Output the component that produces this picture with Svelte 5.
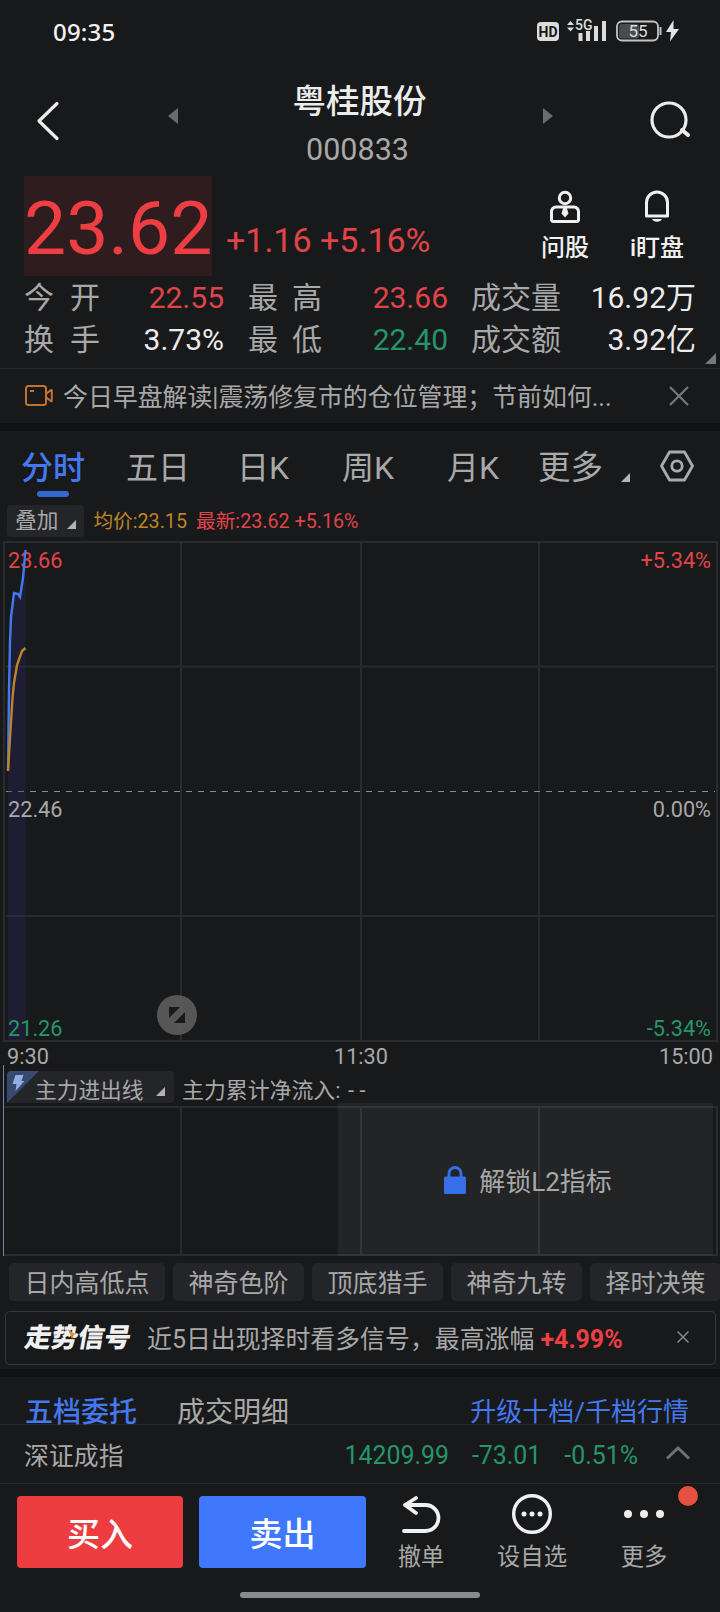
<script>
	const stats = [
		{ label: "今 开", value: "22.55", tone: "up" },
		{ label: "最 高", value: "23.66", tone: "up" },
		{ label: "成交量", value: "16.92万", tone: "plain" },
		{ label: "换 手", value: "3.73%", tone: "plain" },
		{ label: "最 低", value: "22.40", tone: "down" },
		{ label: "成交额", value: "3.92亿", tone: "plain" },
	];
	const periods = ["分时", "五日", "日K", "周K", "月K"];
	const signals = ["日内高低点", "神奇色阶", "顶底猎手", "神奇九转", "择时决策"];

	let period = "分时";

	// minute points, in chart pixels
	const price = [[8, 231], [9, 150], [10, 102], [11, 77], [14, 53], [18, 54], [20, 57], [23, 38], [25.5, 10]];
	const average = [[8, 231], [10, 198], [12.5, 158], [14, 143], [17, 125], [22, 111], [25.5, 108]];
	const toPoints = (list) => list.map((p) => p.join(",")).join(" ");
</script>

<div class="app">
	<div class="status">
		<span class="clock">09:35</span>
		<svg width="146" height="30" viewBox="0 0 146 30">
			<rect x="1" y="6" width="22" height="19" rx="4" fill="#dcdcdc" />
			<text x="12" y="21" class="hd" text-anchor="middle">HD</text>
			<path d="M31 9l3.5-4 3.5 4zM31 11.500h7l-3.500 4z" fill="#dcdcdc" />
			<text x="39" y="14" class="net">5G</text>
			<path d="M44.500 25v-8M52 25v-10M60 25V10M68 25V5" stroke="#dcdcdc" stroke-width="4" />
			<rect x="81" y="5.500" width="41" height="19" rx="5" fill="none" stroke="#c4c4c4" stroke-width="1.800" />
			<rect x="83" y="8" width="20" height="14.500" rx="3" fill="#4a4b4c" />
			<path d="M124.500 11v8" stroke="#c4c4c4" stroke-width="2" />
			<text x="102" y="21" class="power" text-anchor="middle">55</text>
			<path d="M137.500 4l-7.500 12h5l-1 9.500 9-12.500h-5.500z" fill="#e4e4e4" />
		</svg>
	</div>

	<header>
		<svg class="back" width="24" height="42" viewBox="0 0 24 42">
			<path d="M21 3.500L3 21l18 17.500" fill="none" stroke="#ececec" stroke-width="3.200" stroke-linecap="round" stroke-linejoin="round" />
		</svg>
		<svg class="prev" width="10" height="16"><path d="M10 0v16L0 8z" fill="#6b6c6d" /></svg>
		<div class="name">
			<h1>粤桂股份</h1>
			<span>000833</span>
		</div>
		<svg class="next" width="10" height="16"><path d="M0 0v16l10-8z" fill="#6b6c6d" /></svg>
		<svg class="search" width="42" height="40" viewBox="0 0 42 40">
			<circle cx="19" cy="20" r="17" fill="none" stroke="#ececec" stroke-width="3.200" />
			<path d="M32 30l6 5" stroke="#ececec" stroke-width="4" stroke-linecap="round" />
		</svg>
	</header>

	<section class="quote">
		<div class="last">23.62</div>
		<div class="change">+1.16 +5.16%</div>
		<div class="tool ask">
			<svg width="32" height="34" viewBox="0 0 32 34" fill="none" stroke="#f0f0f0" stroke-width="3">
				<circle cx="16" cy="8" r="5.700" />
				<path d="M7 17h18a4.500 4.500 0 0 1 4.500 4.500v8.300a1.700 1.700 0 0 1-1.700 1.700H4.200a1.700 1.700 0 0 1-1.700-1.700v-8.300A4.500 4.500 0 0 1 7 17z" />
				<path d="M14.500 17h3l2 6.500-3.500 4-3.500-4z" fill="#f0f0f0" stroke="none" />
			</svg>
			<span>问股</span>
		</div>
		<div class="tool watch">
			<svg width="28" height="34" viewBox="0 0 28 34">
				<path d="M3.500 26V12.500a10.500 10.500 0 0 1 21 0V26z" fill="none" stroke="#f0f0f0" stroke-width="3" stroke-linejoin="round" />
				<path d="M9 29h10a5.400 4.500 0 0 1-10 0z" fill="#f0f0f0" />
			</svg>
			<span>i盯盘</span>
		</div>
	</section>

	<section class="stats">
		{#each stats as item}
			<span class="label">{item.label}</span>
			<span class="value {item.tone}">{item.value}</span>
		{/each}
		<svg class="expand" width="11" height="11"><path d="M11 0v11H0z" fill="#77787a" /></svg>
	</section>

	<section class="news">
		<svg width="30" height="24" viewBox="0 0 30 24" fill="none" stroke="#c4722d" stroke-width="2">
			<rect x="2" y="2" width="20" height="19" rx="2.500" />
			<path d="M22 10l5-4q.800-.300.800.600v10q0 .900-.800.600l-5-4M6 7h4" />
		</svg>
		<p>今日早盘解读|震荡修复市的仓位管理；节前如何...</p>
		<svg class="close" width="22" height="22"><path d="M2 2l18 18M20 2L2 20" stroke="#77787a" stroke-width="2.200" /></svg>
	</section>

	<nav class="periods">
		{#each periods as name}
			<button class:active={name === period} on:click={() => (period = name)}>{name}</button>
		{/each}
		<button class="more">更多</button>
		<svg class="corner" width="9" height="9"><path d="M9 0v9H0z" fill="#b4b4b4" /></svg>
		<svg class="setting" width="34" height="32" viewBox="0 0 34 32" fill="none" stroke="#aaaaaa" stroke-width="2.800">
			<path d="M9.500 2h15L32.500 16l-8 14h-15L1.500 16z" stroke-linejoin="round" />
			<circle cx="17" cy="16" r="5.200" />
		</svg>
	</nav>

	<div class="legend">
		<button class="picker">叠加<svg width="9" height="9"><path d="M9 0v9H0z" fill="#b4b4b4" /></svg></button>
		<span class="avg">均价:23.15</span>
		<span class="up">最新:23.62 +5.16%</span>
	</div>

	<svg class="chart" width="720" height="525" viewBox="0 0 720 525">
		<g stroke="#2a2b2d" stroke-width="2" fill="none">
			<path d="M4 2H717V501H4zM181 2V501M361 2V501M539 2V501M6 126.500H715M6 376H715" />
		</g>
		<path d="M6 251.500H715" stroke="#8a9097" stroke-width="1.200" stroke-dasharray="6 6" />
		<polygon points="{toPoints(price)} 25.5,500 8,500" fill="#2a2760" fill-opacity=".37" />
		<text x="8" y="28" class="up">23.66</text>
		<text x="711" y="28" class="up" text-anchor="end">+5.34%</text>
		<text x="8" y="277" class="axis">22.46</text>
		<text x="711" y="277" class="axis" text-anchor="end">0.00%</text>
		<text x="8" y="496" class="down">21.26</text>
		<text x="711" y="496" class="down" text-anchor="end">-5.34%</text>
		<text x="7" y="524" class="axis">9:30</text>
		<text x="361" y="524" class="axis" text-anchor="middle">11:30</text>
		<text x="713" y="524" class="axis" text-anchor="end">15:00</text>
		<polyline points={toPoints(price)} fill="none" stroke="#4378ee" stroke-width="2.400" />
		<polyline points={toPoints(average)} fill="none" stroke="#bd8428" stroke-width="2.400" />
		<circle cx="177" cy="475" r="20" fill="#5b5b5b" fill-opacity=".93" />
		<path d="M169 467h11l-11 11zM185 472v11h-11z" fill="#191a1b" />
	</svg>

	<section class="flow">
		<div class="flow-head">
			<button class="picker">
				<svg class="flash" width="32" height="32" viewBox="0 0 32 32">
					<path d="M0 4a4 4 0 0 1 4-4h28L0 32z" fill="#38496f" />
					<path d="M8.500 4h8l-2 6h3L8.500 20l1-7H5.500z" fill="#93aee0" />
				</svg>
				主力进出线<svg width="9" height="9"><path d="M9 0v9H0z" fill="#b4b4b4" /></svg>
			</button>
			<span>主力累计净流入: <i>- -</i></span>
		</div>
		<div class="flow-body">
			<svg width="720" height="153" viewBox="0 0 720 153">
				<path d="M4 4H717V153M181 4V152M361 4V152M539 4V152M4 152H717" stroke="#2a2b2d" stroke-width="2" fill="none" />
			</svg>
			<div class="lock">
				<svg width="24" height="30" viewBox="0 0 24 30">
					<path d="M6 12V8.500a6 6 0 0 1 12 0V12" fill="none" stroke="#3670e8" stroke-width="2.800" />
					<rect x="1" y="11.500" width="22" height="17.500" rx="1.500" fill="#3670e8" />
				</svg>
				<span>解锁L2指标</span>
			</div>
		</div>
	</section>

	<div class="chips">
		{#each signals as name}
			<button>{name}</button>
		{/each}
	</div>

	<div class="signal">
		<div class="brand">走势信号<svg width="9" height="10"><path d="M1 0l8 5-2 5-2-4z" fill="#e08a35" /></svg></div>
		<p>近5日出现择时看多信号，最高涨幅 <b>+4.99%</b></p>
		<svg class="close" width="14" height="14"><path d="M1.500 1.500l11 11M12.500 1.500l-11 11" stroke="#88898b" stroke-width="1.500" /></svg>
	</div>

	<div class="orders">
		<span class="active">五档委托</span>
		<span>成交明细</span>
		<a href="#level2">升级十档/千档行情</a>
	</div>

	<div class="index">
		<span class="title">深证成指</span>
		<span class="down">14209.99</span>
		<span class="down">-73.01</span>
		<span class="down">-0.51%</span>
		<svg width="26" height="16"><path d="M2 13.500L13 3l11 10.500" fill="none" stroke="#707173" stroke-width="3" /></svg>
	</div>

	<footer>
		<button class="trade buy">买入</button>
		<button class="trade sell">卖出</button>
		<div class="action cancel">
			<svg width="44" height="40" viewBox="0 0 44 40" fill="none" stroke="#f0f0f0" stroke-width="3.800" stroke-linecap="round" stroke-linejoin="round">
				<path d="M17 4L6 11l11 8M6 11h20.500a13 13 0 0 1 0 26H5" />
			</svg>
			<span>撤单</span>
		</div>
		<div class="action pick">
			<svg width="44" height="40" viewBox="0 0 44 40" fill="#f0f0f0">
				<circle cx="22" cy="20" r="18.300" fill="none" stroke="#f0f0f0" stroke-width="3.400" />
				<circle cx="14" cy="20" r="2.500" /><circle cx="22" cy="20" r="2.500" /><circle cx="30" cy="20" r="2.500" />
			</svg>
			<span>设自选</span>
		</div>
		<div class="action menu">
			<svg width="44" height="40" viewBox="0 0 44 40" fill="#f0f0f0">
				<circle cx="6" cy="20" r="4" /><circle cx="22" cy="20" r="4" /><circle cx="38" cy="20" r="4" />
			</svg>
			<span>更多</span>
			<em class="badge"></em>
		</div>
	</footer>
	<div class="home"></div>
</div>

<style>
	:global(body) {
		background: #18191b;
	}
	.app {
		display: flex;
		flex-direction: column;
		width: 720px;
		height: 1612px;
		overflow: hidden;
		background: #18191b;
		color: #a8a8a8;
		font-family: Roboto, "Noto Sans CJK SC", sans-serif;
		font-weight: 400;
	}
	.app > * {
		flex: none;
		box-sizing: border-box;
	}
	svg {
		display: block;
		flex: none;
	}
	button {
		border: 0;
		padding: 0;
		background: none;
		color: inherit;
		font: inherit;
		white-space: nowrap;
	}
	h1, p {
		margin: 0;
		font-weight: 400;
		white-space: nowrap;
	}
	.up { color: #e04448; fill: #e04448; }
	.down { color: #259668; fill: #259668; }
	.plain { color: #ececec; }

	.status {
		display: flex;
		justify-content: space-between;
		height: 64px;
		padding: 16px 38px 0 53px;
	}
	.clock {
		font: 500 24px/32px "Noto Sans", sans-serif;
		color: #f2f2f2;
		letter-spacing: 0.2px;
	}
	.hd { font: 700 14px Roboto; fill: #18191b; }
	.net { font: 500 14px Roboto; fill: #dcdcdc; }
	.power { font: 400 17px Roboto; fill: #dcdcdc; }

	header {
		display: flex;
		height: 112px;
		padding: 0 26px 0 36px;
	}
	.back { margin-top: 36px; }
	.prev { margin: 44px 0 0 108px; }
	.name {
		flex: 1;
		text-align: center;
	}
	.name h1 {
		color: #ececec;
		font-size: 33.5px;
		font-weight: 500;
		line-height: 48px;
		margin: 14px 1px 0 -1px;
	}
	.name span {
		display: block;
		margin: 0 3px 0 -3px;
		font-size: 30.5px;
		line-height: 48px;
	}
	.next { margin: 44px 97px 0 0; }
	.search { margin-top: 36px; margin-right: 2px; }

	.quote {
		display: flex;
		height: 100px;
		padding: 0 22px 0 24px;
	}
	.last {
		width: 188px;
		background: #2f1c1f;
		color: #ed3f43;
		font-size: 75px;
		line-height: 105px;
		text-align: center;
	}
	.change {
		margin-left: 14px;
		color: #e04448;
		font-size: 34px;
		line-height: 128px;
		white-space: nowrap;
	}
	.tool {
		display: flex;
		flex-direction: column;
		align-items: center;
		width: 92px;
		padding-top: 14px;
		color: #f0f0f0;
		font-size: 24px;
		line-height: 40px;
		font-weight: 500;
	}
	.ask { margin-left: auto; }
	.watch { margin-right: -5px; }
	.tool span { margin-top: 4px; }

	.stats {
		position: relative;
		display: grid;
		grid-template-columns: 76px 124px 24px 74px 126px 23px 90px 135px;
		grid-auto-rows: 42px;
		height: 93px;
		padding: 1px 0 0 24px;
		border-bottom: 1px solid #2a2b2d;
		font-size: 30px;
		line-height: 42px;
		white-space: nowrap;
	}
	.label {
		text-align-last: justify;
	}
	.label:nth-of-type(6n + 3) { grid-column: 4; }
	.label:nth-of-type(6n + 5) { grid-column: 7; }
	.value { text-align: right; }
	.expand {
		position: absolute;
		right: 4px;
		bottom: 4px;
	}

	.news {
		display: flex;
		align-items: center;
		height: 62px;
		padding: 0 30px 0 24px;
		border-bottom: 8px solid #111214;
		font-size: 24.9px;
	}
	.news p { margin: -3px 0 0 9px; }
	.close { margin-left: auto; }

	.periods {
		display: flex;
		height: 74px;
		padding: 0 26px 0 21px;
		font-size: 32px;
		line-height: 74px;
	}
	.periods button {
		position: relative;
		width: 64px;
		height: 74px;
		margin-right: 41px;
		line-height: 74px;
	}
	.periods .active {
		color: #4378ee;
		font-weight: 500;
	}
	.periods .active::after {
		content: "";
		position: absolute;
		left: 16px;
		bottom: 8px;
		width: 32px;
		height: 6px;
		border-radius: 3px;
		background: #3567d0;
	}
	.periods .more { margin: 0 0 0 -8px; font-size: 32.5px; }
	.corner { margin: 42px 0 0 19px; }
	.setting { margin: 19px 0 0 auto; }

	.legend {
		display: flex;
		height: 35px;
		padding-left: 7px;
		font-size: 19.7px;
		line-height: 34px;
		white-space: nowrap;
	}
	.legend span { margin-left: 9px; }
	.avg { color: #bd8428; }
	.picker {
		position: relative;
		display: flex;
		align-items: center;
		height: 32px;
		padding: 0 8px;
		border-radius: 4px;
		background: #242529;
		font-size: 21.7px;
	}
	.picker > svg:last-child { margin: 6px 0 0 9px; }

	.chart text {
		font-size: 21.7px;
	}
	.axis { fill: #a8a8a8; }

	.flow {
		height: 191px;
		margin-left: 3px;
		border-left: 1px solid #7882a0;
	}
	.flow-head {
		display: flex;
		align-items: center;
		height: 32px;
		padding: 6px 0 0 3px;
		font-size: 21.9px;
		white-space: nowrap;
	}
	.flow-head .picker { padding: 2px 8px 0 28px; width: 167px; box-sizing: border-box; }
	.flow-head .picker > svg:last-child { margin-left: 13px; }
	.flow-head > span { margin-left: 8px; padding-top: 2px; }
	.flow-head i { font-style: normal; margin-left: 2px; }
	.flash {
		position: absolute;
		left: 0;
		top: 0;
	}
	.flow-body {
		position: relative;
		height: 153px;
		margin-left: -4px;
	}
	.lock {
		position: absolute;
		left: 338px;
		right: 7px;
		top: 0;
		bottom: 0;
		display: flex;
		align-items: center;
		justify-content: center;
		gap: 12px;
		padding-left: 4px;
		background: rgba(255, 255, 255, 0.05);
		font-size: 26px;
	}

	.chips {
		display: flex;
		gap: 8px;
		height: 55px;
		padding: 7px 0 0 9px;
		overflow: hidden;
	}
	.chips button {
		flex: none;
		height: 38px;
		padding: 3px 15.500px 0;
		border-radius: 5px;
		background: #242529;
		font-size: 25px;
		line-height: 35px;
	}

	.signal {
		display: flex;
		align-items: center;
		height: 54px;
		margin: 0 4px 4px 5px;
		padding: 0 25px 0 19px;
		border: 1px solid #37383a;
		border-radius: 5px;
		font-size: 24.9px;
	}
	.brand {
		position: relative;
		width: 106px;
		color: #f0f0f0;
		font-size: 26.5px;
		font-weight: 900;
		line-height: 40px;
		transform: skewX(-10deg);
	}
	.brand svg {
		position: absolute;
		left: 40px;
		top: 11px;
	}
	.signal p { margin: -2px 0 0 16px; }
	.signal b { color: #ed3f43; }
	.signal .close { margin-bottom: 2px; }

	.orders {
		display: flex;
		height: 56px;
		padding: 0 31px 0 25px;
		border-top: 8px solid #111214;
		border-bottom: 1px solid #2a2b2d;
		font-size: 28px;
		line-height: 71px;
		white-space: nowrap;
	}
	.orders span { margin-right: 40px; }
	.orders .active { color: #4378ee; font-weight: 500; }
	.orders a {
		margin-left: auto;
		color: #4378ee;
		font-size: 26px;
		text-decoration: none;
	}

	.index {
		display: flex;
		align-items: center;
		height: 59px;
		padding: 3px 29px 0 24px;
		border-bottom: 1px solid #2a2b2d;
		font-size: 24.9px;
	}
	.title { margin: -4px auto 0 0; }
	.index .down { margin-left: 23px; }
	.index svg { margin-left: 27px; margin-bottom: 6px; }

	footer {
		display: flex;
		height: 108px;
		padding: 12px 0 0 17px;
	}
	.trade {
		width: 166px;
		height: 72px;
		margin-right: 16px;
		border-radius: 4px;
		color: #fff;
		font-size: 33px;
		font-weight: 500;
	}
	.buy { background: #ed3d41; }
	.sell { background: #4078fd; width: 167px; }
	.action {
		position: relative;
		display: flex;
		flex-direction: column;
		align-items: center;
		width: 80px;
		margin-top: -2px;
		font-size: 23.3px;
		line-height: 40px;
	}
	.action span { margin-top: 3px; }
	.cancel { margin-left: -1px; }
	.pick { margin-left: 31px; }
	.menu { margin-left: 32px; }
	.badge {
		position: absolute;
		left: 74px;
		top: -8px;
		width: 20px;
		height: 20px;
		border-radius: 50%;
		background: #e64f42;
	}
	.home {
		width: 240px;
		height: 6px;
		margin: 0 auto;
		border-radius: 3px;
		background: #8a8b8c;
	}
</style>
